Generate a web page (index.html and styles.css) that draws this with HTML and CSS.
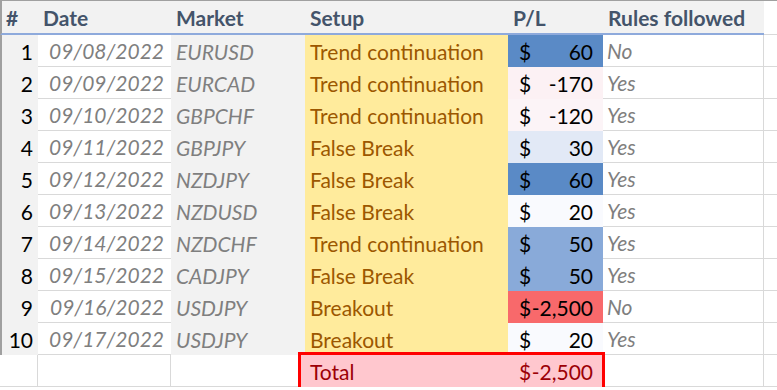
FILE: index.html
```html
<!DOCTYPE html>
<html>
<head>
<meta charset="utf-8">
<link rel="stylesheet" href="styles.css">
</head>
<body>
<div class="sheet">
  <div class="h first">#</div>
  <div class="h">Date</div>
  <div class="h">Market</div>
  <div class="h">Setup</div>
  <div class="h">P/L</div>
  <div class="h">Rules followed</div>
  <div class="h blank"></div>

  <div class="num">1</div><div class="date">09/08/2022</div><div class="mkt">EURUSD</div><div class="setup">Trend continuation</div><div class="pl" style="background:#5a8ac6"><span>$</span><span>60</span></div><div class="rules">No</div><div class="extra"></div>
  <div class="num">2</div><div class="date">09/09/2022</div><div class="mkt">EURCAD</div><div class="setup">Trend continuation</div><div class="pl" style="background:#fcf1f4"><span>$</span><span>-170</span></div><div class="rules">Yes</div><div class="extra"></div>
  <div class="num">3</div><div class="date">09/10/2022</div><div class="mkt">GBPCHF</div><div class="setup">Trend continuation</div><div class="pl" style="background:#fcf4f7"><span>$</span><span>-120</span></div><div class="rules">Yes</div><div class="extra"></div>
  <div class="num">4</div><div class="date">09/11/2022</div><div class="mkt">GBPJPY</div><div class="setup">False Break</div><div class="pl" style="background:#e2e9f6"><span>$</span><span>30</span></div><div class="rules">Yes</div><div class="extra"></div>
  <div class="num">5</div><div class="date">09/12/2022</div><div class="mkt">NZDJPY</div><div class="setup">False Break</div><div class="pl" style="background:#5a8ac6"><span>$</span><span>60</span></div><div class="rules">Yes</div><div class="extra"></div>
  <div class="num">6</div><div class="date">09/13/2022</div><div class="mkt">NZDUSD</div><div class="setup">False Break</div><div class="pl" style="background:#f9fafe"><span>$</span><span>20</span></div><div class="rules">Yes</div><div class="extra"></div>
  <div class="num">7</div><div class="date">09/14/2022</div><div class="mkt">NZDCHF</div><div class="setup">Trend continuation</div><div class="pl" style="background:#89aad9"><span>$</span><span>50</span></div><div class="rules">Yes</div><div class="extra"></div>
  <div class="num">8</div><div class="date">09/15/2022</div><div class="mkt">CADJPY</div><div class="setup">False Break</div><div class="pl" style="background:#89aad9"><span>$</span><span>50</span></div><div class="rules">Yes</div><div class="extra"></div>
  <div class="num">9</div><div class="date">09/16/2022</div><div class="mkt">USDJPY</div><div class="setup">Breakout</div><div class="pl" style="background:#f8696b"><span>$</span><span>-2,500</span></div><div class="rules">No</div><div class="extra"></div>
  <div class="num">10</div><div class="date">09/17/2022</div><div class="mkt">USDJPY</div><div class="setup">Breakout</div><div class="pl" style="background:#f9fafe"><span>$</span><span>20</span></div><div class="rules">Yes</div><div class="extra"></div>

  <div class="foot vline"></div>
  <div class="foot vline"></div>
  <div class="foot"></div>
  <div class="total">
    <span class="total-label">Total</span>
    <span class="total-amt"><span>$</span><span>-2,500</span></span>
  </div>
  <div class="foot rline"></div>
  <div class="foot"></div>
</div>
</body>
</html>
```

FILE: styles.css
```css
* { box-sizing: border-box; }
html, body { margin: 0; padding: 0; background: #ffffff; }
body {
  font-family: Lato, "Open Sans", sans-serif;
  font-size: 21px;
  color: #000;
}
.sheet {
  display: grid;
  grid-template-columns: 38px 133px 134px 203px 95px 161px 1fr;
  grid-template-rows: 35px repeat(11, 32px);
  width: 777px;
}
.sheet > div {
  display: flex;
  align-items: center;
  white-space: nowrap;
  overflow: visible;
}
.h {
  background: #f2f2f2;
  color: #44546a;
  font-weight: bold;
  border-top: 1px solid #a0a0a0;
  border-bottom: 2px solid #8eaadc;
  padding-left: 5px;
}
.h.first { padding-left: 4px; border-left: 2px solid #a0a0a0; }
.h.blank { background: #fff; border-bottom: 1px solid #d9d9d9; }
.num {
  background: #f2f2f2;
  justify-content: flex-end;
  padding-right: 5px;
  border-left: 2px solid #a0a0a0;
}
.date {
  background: #fff;
  border-bottom: 1px solid #d9d9d9;
  justify-content: flex-end;
  padding-right: 7px;
  color: #7f7f7f;
  font-style: italic;
}
.mkt {
  background: #f2f2f2;
  color: #7f7f7f;
  font-style: italic;
  padding-left: 5px;
}
.setup {
  background: #ffeb9c;
  color: #9c5700;
  padding-left: 5px;
}
.pl {
  justify-content: space-between;
  padding: 0 10px 0 11px;
}
.rules {
  background: #fff;
  border-bottom: 1px solid #d9d9d9;
  border-right: 1px solid #d9d9d9;
  color: #7f7f7f;
  font-style: italic;
  padding-left: 4px;
}
.extra, .foot {
  background: #fff;
  border-bottom: 1px solid #d9d9d9;
}
.vline { border-right: 1px solid #d9d9d9; }
.rline { border-right: 1px solid #d9d9d9; }
.total {
  grid-column: 4 / 6;
  position: relative;
  color: #9c0006;
}
.total::before {
  content: "";
  position: absolute;
  top: -3px;
  bottom: -3px;
  left: -7px;
  right: -2px;
  background: #ffc7ce;
  border: 3px solid #ff0000;
  z-index: 0;
}
.total-label {
  position: relative;
  width: 203px;
  padding-left: 5px;
}
.total-amt {
  position: relative;
  width: 95px;
  display: flex;
  justify-content: space-between;
  padding: 0 10px 0 11px;
}
```
